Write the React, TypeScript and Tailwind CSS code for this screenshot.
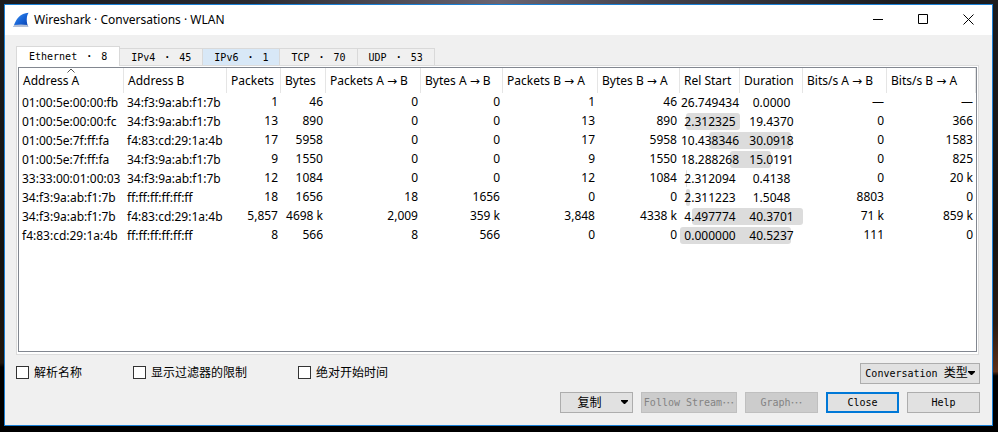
import type { ReactNode } from "react";

type Row = {
  a: string;
  b: string;
  counts: string[];
  start: string;
  duration: string;
  rates: string[];
};

const rows: Row[] = [
  { a: "01:00:5e:00:00:fb", b: "34:f3:9a:ab:f1:7b", counts: ["1", "46", "0", "0", "1", "46"], start: "26.749434", duration: "0.0000", rates: ["—", "—"] },
  { a: "01:00:5e:00:00:fc", b: "34:f3:9a:ab:f1:7b", counts: ["13", "890", "0", "0", "13", "890"], start: "2.312325", duration: "19.4370", rates: ["0", "366"] },
  { a: "01:00:5e:7f:ff:fa", b: "f4:83:cd:29:1a:4b", counts: ["17", "5958", "0", "0", "17", "5958"], start: "10.438346", duration: "30.0918", rates: ["0", "1583"] },
  { a: "01:00:5e:7f:ff:fa", b: "34:f3:9a:ab:f1:7b", counts: ["9", "1550", "0", "0", "9", "1550"], start: "18.288268", duration: "15.0191", rates: ["0", "825"] },
  { a: "33:33:00:01:00:03", b: "34:f3:9a:ab:f1:7b", counts: ["12", "1084", "0", "0", "12", "1084"], start: "2.312094", duration: "0.4138", rates: ["0", "20 k"] },
  { a: "34:f3:9a:ab:f1:7b", b: "ff:ff:ff:ff:ff:ff", counts: ["18", "1656", "18", "1656", "0", "0"], start: "2.311223", duration: "1.5048", rates: ["8803", "0"] },
  { a: "34:f3:9a:ab:f1:7b", b: "f4:83:cd:29:1a:4b", counts: ["5,857", "4698 k", "2,009", "359 k", "3,848", "4338 k"], start: "4.497774", duration: "40.3701", rates: ["71 k", "859 k"] },
  { a: "f4:83:cd:29:1a:4b", b: "ff:ff:ff:ff:ff:ff", counts: ["8", "566", "8", "566", "0", "0"], start: "0.000000", duration: "40.5237", rates: ["111", "0"] },
];

const columns = [
  { name: "Address A", width: "w-[105px]" },
  { name: "Address B", width: "w-[103px]" },
  { name: "Packets", width: "w-[54px]" },
  { name: "Bytes", width: "w-[45px]" },
  { name: "Packets A → B", width: "w-[95px]" },
  { name: "Bytes A → B", width: "w-[82px]" },
  { name: "Packets B → A", width: "w-[95px]" },
  { name: "Bytes B → A", width: "w-[82px]" },
  { name: "Rel Start", width: "w-[60px]" },
  { name: "Duration", width: "w-[63px]" },
  { name: "Bits/s A → B", width: "w-[84px]" },
  { name: "Bits/s B → A", width: "w-[89px]" },
];

const tabs = [
  { name: "Ethernet", count: 8, style: "relative h-[20px] border-l bg-white px-3" },
  { name: "IPv4", count: 45, style: "h-[18px] px-[11px]" },
  { name: "IPv6", count: 1, style: "h-[18px] bg-[#d8e8f7] px-[11px]" },
  { name: "TCP", count: 70, style: "h-[18px] px-[11px]" },
  { name: "UDP", count: 53, style: "h-[18px] px-[11px]" },
];

const total = Math.max(...rows.map((r) => Number(r.start) + Number(r.duration)));

function TimeBar({ start, duration }: { start: string; duration: string }) {
  return (
    <span className="absolute inset-y-px left-0 -z-10 w-[205%]">
      <span
        className="absolute inset-y-0 rounded-[3px] bg-[#dcdcdc]"
        style={{ left: `${(Number(start) / total) * 100}%`, width: `${(Number(duration) / total) * 100}%` }}
      />
    </span>
  );
}

function Cjk({ children }: { children: ReactNode }) {
  return <span className="font-['Noto_Sans_CJK_SC',sans-serif] text-[12px] leading-4">{children}</span>;
}

function Triangle() {
  return (
    <svg width="7" height="4" viewBox="0 0 7 4" className="shrink-0" aria-hidden="true">
      <path d="M0 0h7v1L4 4H3L0 1z" fill="#000" />
    </svg>
  );
}

function Check({ label }: { label: string }) {
  return (
    <label className="flex items-center gap-[5px]">
      <input type="checkbox" className="size-[13px] appearance-none border border-[#333] bg-white" />
      <Cjk>{label}</Cjk>
    </label>
  );
}

const button = "flex h-[21px] items-center justify-center whitespace-nowrap";
const plain = "border border-[#adadad] bg-[#e1e1e1] pb-0.5";
const disabled = "border border-[#bfbfbf] bg-[#cccccc] text-[#838383]";

export default function App() {
  return (
    <div className="flex min-h-screen bg-black bg-[linear-gradient(90deg,#1b1b1f_0%,#2b2a30_25%,#6a6471_50%,#45424c_65%,#1c1c1f_90%,#1c1c1f_100%),linear-gradient(180deg,#1b1b1d_0%,#17130f_55%,#2a1a10_75%,#5c3018_86%,#000_87%),linear-gradient(180deg,#1b1b1d_0%,#15130f_60%,#20160d_84%,#000_85%)] bg-[length:100%_4px,5px_100%,4px_100%] bg-[position:left_top,right_top,left_top] bg-no-repeat pt-1 pr-[5px] pb-[6px] pl-1 text-black">
      <main className="flex min-w-0 flex-1 flex-col border border-[#1a7fd4] bg-[#f0f0f0] font-['DejaVu_Sans_Mono','Noto_Sans_CJK_SC',monospace] text-[10px] leading-4">
        <header className="flex h-[30px] items-center justify-between bg-white pr-[18px] pl-2">
          <div className="flex items-center gap-[5px]">
            <svg width="16" height="16" viewBox="0 0 16 16" aria-hidden="true">
              <defs>
                <linearGradient id="fin" x1="0" y1="0" x2="1" y2="1">
                  <stop offset="0" stopColor="#4b9af0" />
                  <stop offset="0.5" stopColor="#1765d8" />
                  <stop offset="1" stopColor="#0a3fae" />
                </linearGradient>
              </defs>
              <path d="M0.5 15C2.500 7 7.500 1.200 15.500 0.800C13.300 4.500 13.200 10 15.300 15Z" fill="url(#fin)" />
              <path d="M0.500 15l.6-2q7-1 13.400 0l.8 2z" fill="#b3bfd6" />
            </svg>
            <h1 className="font-['Noto_Sans',sans-serif] text-[12px]">Wireshark · Conversations · WLAN</h1>
          </div>
          <div className="flex items-center gap-[34px] pb-0.5">
            <button aria-label="Minimize" className="flex size-[11px] items-center">
              <svg width="11" height="11" aria-hidden="true"><path d="M0 5.500h10" stroke="#000" /></svg>
            </button>
            <button aria-label="Maximize" className="flex size-[11px] items-center">
              <svg width="11" height="11" aria-hidden="true"><path d="M.5.5h9v9h-9z" fill="none" stroke="#000" /></svg>
            </button>
            <button aria-label="Close window" className="flex size-[11px] items-center">
              <svg width="11" height="11" aria-hidden="true"><path d="M.5.5l10 10M10.500.5l-10 10" stroke="#000" /></svg>
            </button>
          </div>
        </header>

        <div role="tablist" className="-mb-px mt-[11px] ml-[11px] flex items-end">
          {tabs.map((tab) => (
            <button
              key={tab.name}
              role="tab"
              aria-selected={tab.count === 8}
              className={`flex items-center gap-1.5 border-t border-r border-[#d9d9d9] ${tab.style}`}
            >
              <span>{tab.name}</span>
              <span className="w-3 text-center font-bold">·</span>
              <span>{tab.count}</span>
            </button>
          ))}
        </div>

        <section className="mr-[13px] ml-[11px] flex flex-1 border border-[#dcdcdc] bg-white px-px pt-px pb-[2px]">
          <div className="min-w-0 flex-1 border border-[#828790]">
            <table className="w-full table-fixed border-separate border-spacing-0 whitespace-nowrap font-['Noto_Sans','DejaVu_Sans',sans-serif] text-[12px]">
              <thead>
                <tr className="h-[25px]">
                  {columns.map((column, i) => (
                    <th key={column.name} className={`relative border-r border-[#e5e5e5] p-0 pl-1 text-left font-normal ${column.width}`}>
                      {i === 0 && (
                        <svg width="8" height="5" viewBox="0 0 8 5" className="absolute inset-x-0 top-0 mx-auto" aria-hidden="true">
                          <path d="M.5 4.500L4 1l3.500 3.500" fill="none" stroke="#555" />
                        </svg>
                      )}
                      {column.name}
                    </th>
                  ))}
                </tr>
              </thead>
              <tbody className="relative isolate">
                {rows.map((row) => (
                  <tr key={row.a + row.b} className="h-[19px]">
                    <td className="p-0 pl-[3px]">{row.a}</td>
                    <td className="p-0 pl-[3px]">{row.b}</td>
                    {row.counts.map((count, i) => (
                      <td key={i} className="p-0 pr-[3px] pb-0.5 text-right">{count}</td>
                    ))}
                    <td className="relative p-0 text-center">
                      <TimeBar start={row.start} duration={row.duration} />
                      {row.start}
                    </td>
                    <td className="p-0 text-center">{row.duration}</td>
                    {row.rates.map((rate, i) => (
                      <td key={i} className="p-0 pr-[3px] pb-0.5 text-right">{rate}</td>
                    ))}
                  </tr>
                ))}
              </tbody>
            </table>
          </div>
        </section>

        <div className="mt-2 mr-3 ml-[11px] flex items-start justify-between">
          <div className="flex gap-[51px] pt-px">
            <Check label="解析名称" />
            <Check label="显示过滤器的限制" />
            <Check label="绝对开始时间" />
          </div>
          <button className={`${button} ${plain} w-[120px]`}>
            <span>Conversation <Cjk>类型</Cjk></span>
            <Triangle />
          </button>
        </div>

        <div className="mt-2 mr-3 mb-3 flex justify-end gap-2">
          <button className={`${button} ${plain} w-[73px] gap-[19px] pl-3`}>
            <Cjk>复制</Cjk>
            <Triangle />
          </button>
          <button disabled className={`${button} ${disabled} w-[96px]`}>Follow Stream<Cjk>…</Cjk></button>
          <button disabled className={`${button} ${disabled} w-[73px]`}>Graph<Cjk>…</Cjk></button>
          <button className={`${button} w-[73px] border-2 border-[#0078d7] bg-[#e1e1e1]`}>Close</button>
          <button className={`${button} border border-[#adadad] bg-[#e1e1e1] w-[73px]`}>Help</button>
        </div>
      </main>
    </div>
  );
}
